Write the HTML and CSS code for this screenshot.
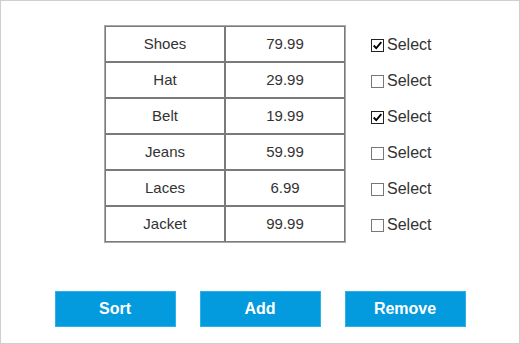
FILE: index.html
```html
<!DOCTYPE html>
<html lang="en">
<head>
  <meta charset="UTF-8">
  <title>Products</title>
  <link rel="stylesheet" href="styles.css">
</head>
<body>
  <div class="frame">
    <div class="list">
      <table class="items">
        <tr><td>Shoes</td><td>79.99</td></tr>
        <tr><td>Hat</td><td>29.99</td></tr>
        <tr><td>Belt</td><td>19.99</td></tr>
        <tr><td>Jeans</td><td>59.99</td></tr>
        <tr><td>Laces</td><td>6.99</td></tr>
        <tr><td>Jacket</td><td>99.99</td></tr>
      </table>
      <div class="picks">
        <label class="pick"><span class="box checked"><svg viewBox="0 0 13 13" width="11" height="11"><path d="M2 6.5 L5 9.5 L11 2.5" fill="none" stroke="#000" stroke-width="2.2"/></svg></span>Select</label>
        <label class="pick"><span class="box"></span>Select</label>
        <label class="pick"><span class="box checked"><svg viewBox="0 0 13 13" width="11" height="11"><path d="M2 6.5 L5 9.5 L11 2.5" fill="none" stroke="#000" stroke-width="2.2"/></svg></span>Select</label>
        <label class="pick"><span class="box"></span>Select</label>
        <label class="pick"><span class="box"></span>Select</label>
        <label class="pick"><span class="box"></span>Select</label>
      </div>
    </div>
    <div class="actions">
      <button class="btn">Sort</button>
      <button class="btn">Add</button>
      <button class="btn">Remove</button>
    </div>
  </div>
</body>
</html>
```

FILE: styles.css
```css
html, body {
  margin: 0;
  padding: 0;
}

body {
  font-family: "Liberation Sans", Arial, sans-serif;
  font-size: 15px;
  color: #333;
  background: #fff;
}

.frame {
  width: 520px;
  height: 344px;
  box-sizing: border-box;
  border: 1px solid #cfcfcf;
  padding-top: 24px;
}

.list {
  display: flex;
  margin-left: 103px;
}

.items {
  border-collapse: separate;
  border-spacing: 0;
  border: 1px solid #a8a8a8;
}

.items td {
  width: 120px;
  height: 36px;
  box-sizing: border-box;
  padding: 0 0 1px;
  border: 1px solid #7a7a7a;
  text-align: center;
  vertical-align: middle;
}

.picks {
  display: flex;
  flex-direction: column;
  padding-top: 2px;
  margin-left: 25px;
}

.pick {
  height: 36px;
  display: flex;
  align-items: center;
  gap: 3px;
  font-size: 16px;
  color: #333;
}

.box {
  width: 13px;
  height: 13px;
  box-sizing: border-box;
  border: 1px solid #777;
  background: #fff;
  display: flex;
  align-items: center;
  justify-content: center;
}

.box.checked {
  border-color: #222;
}

.actions {
  display: flex;
  justify-content: center;
  gap: 24px;
  margin-top: 48px;
}

.btn {
  width: 121px;
  height: 36px;
  border: 1px solid #2fb0e6;
  background: #039ade;
  color: #fff;
  font-family: "Liberation Sans", Arial, sans-serif;
  font-size: 16px;
  font-weight: bold;
  cursor: pointer;
}
```
